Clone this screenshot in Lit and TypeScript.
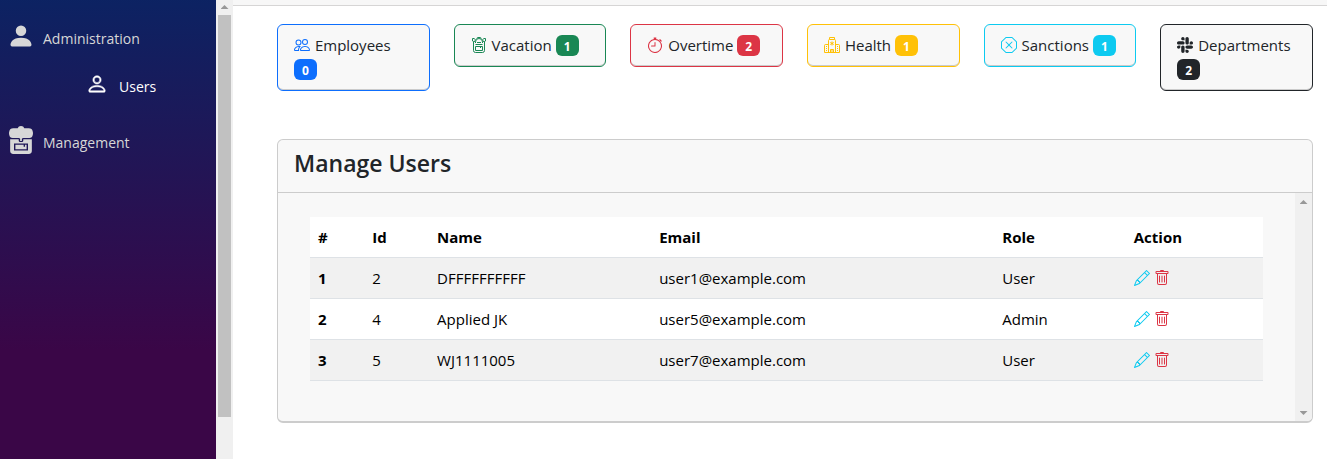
import { LitElement, html, css, svg } from "lit";
import { customElement } from "lit/decorators.js";

const filled = (...paths: string[]) => svg`${paths.map((d) => svg`<path d=${d} fill="currentColor" />`)}`;

const icons = {
  personFill: filled("M3 14s-1 0-1-1 1-4 6-4 6 3 6 4-1 1-1 1H3Zm5-6a3 3 0 1 0 0-6 3 3 0 0 0 0 6Z"),
  person: filled("M8 8a3 3 0 1 0 0-6 3 3 0 0 0 0 6Zm2-3a2 2 0 1 1-4 0 2 2 0 0 1 4 0Zm4 8c0 1-1 1-1 1H3s-1 0-1-1 1-4 6-4 6 3 6 4Zm-1-.004c-.001-.246-.154-.986-.832-1.664C11.516 10.68 10.289 10 8 10c-2.29 0-3.516.68-4.168 1.332-.678.678-.83 1.418-.832 1.664h10Z"),
  backpackFill: svg`
    <path fill="currentColor" d="M8 0a2 2 0 0 0-1.900 1.300H3.600A2.300 2.300 0 0 0 1.300 3.200Q1 4 1.300 5.200A2 2 0 0 0 3.200 6.900H6.700q.5 0 .8.400V8.500h1V7.300q.3-.4.8-.4h3.500a2 2 0 0 0 1.900-1.700q.3-1.200 0-2A2.300 2.300 0 0 0 12.400 1.300H9.900A2 2 0 0 0 8 0Z"/>
    <path fill="currentColor" fill-rule="evenodd" d="M1.800 7.600H6.700v.8a.8.8 0 0 0 .8.8h1a.8.8 0 0 0 .8-.8v-.8H14.200V14.200A1.800 1.800 0 0 1 12.400 16H3.600a1.800 1.800 0 0 1-1.800-1.800ZM4 10v4h8v-4Zm.8.700h4.700v1.200h.8v-1.200h.9v2.600H4.800Z"/>`,
  people: filled("M15 14s1 0 1-1-1-4-5-4-5 3-5 4 1 1 1 1h8Zm-7.978-1A.261.261 0 0 1 7 12.996c.001-.264.167-1.03.76-1.72C8.312 10.629 9.282 10 11 10c1.717 0 2.687.63 3.24 1.276.593.69.758 1.457.76 1.72l-.008.002a.274.274 0 0 1-.014.002H7.022ZM11 7a2 2 0 1 0 0-4 2 2 0 0 0 0 4Zm3-2a3 3 0 1 1-6 0 3 3 0 0 1 6 0ZM6.936 9.28a5.88 5.88 0 0 0-1.23-.247A7.35 7.35 0 0 0 5 9c-4 0-5 3-5 4 0 .667.333 1 1 1h4.216A2.238 2.238 0 0 1 5 13c0-1.01.377-2.042 1.09-2.904.243-.294.526-.569.846-.816ZM4.92 10A5.493 5.493 0 0 0 4 13H1c0-.26.164-1.03.76-1.724.545-.636 1.492-1.256 3.16-1.275ZM1.5 5.500a3 3 0 1 1 6 0 3 3 0 0 1-6 0Zm3-2a2 2 0 1 0 0 4 2 2 0 0 0 0-4Z"),
  backpack: svg`<g fill="none" stroke="currentColor">
    <path d="M6 2V1.500a1 1 0 0 1 1-1h2a1 1 0 0 1 1 1V2M4.500 6V5a3.500 3.500 0 0 1 7 0v1M2.500 5v8.500a2 2 0 0 0 2 2h7a2 2 0 0 0 2-2V5M4.500 9.500h7v4h-7ZM4.500 7.500h7M9.500 9.500v1.500M3 5 1.500 4V1.500h1.800L4.500 3ZM13 5l1.500-1V1.500h-1.800L11.500 3ZM6 5.500h4"/></g>`,
  stopwatch: filled("M8.5 5.6a.5.5 0 1 0-1 0v2.9h-3a.5.5 0 0 0 0 1H8a.5.5 0 0 0 .5-.5V5.6z", "M6.5 1A.5.5 0 0 1 7 .5h2a.5.5 0 0 1 0 1v.57c1.36.196 2.594.78 3.584 1.64a.715.715 0 0 1 .012-.013l.354-.354-.354-.353a.5.5 0 0 1 .707-.708l1.414 1.415a.5.5 0 1 1-.707.707l-.353-.354-.354.354a.512.512 0 0 1-.013.012A7 7 0 1 1 7 2.071V1.5a.5.5 0 0 1-.5-.5zM8 3a6 6 0 1 0 .001 12A6 6 0 0 0 8 3z"),
  hospital: svg`<g fill="none" stroke="currentColor">
    <path d="M5.500 2.500V.5h5v2M4.500 15.500v-12a1 1 0 0 1 1-1h5a1 1 0 0 1 1 1v12M4.500 7.500h-3a1 1 0 0 0-1 1v7h15v-7a1 1 0 0 0-1-1h-3M6.500 15.500v-3h3v3M8 12.500v3M8 4.500v4M6.300 5.500l3.400 2M9.700 5.500l-3.400 2"/>
    <path d="M2.500 9v1M2.500 11v1M2.500 13v1M13.500 9v1M13.500 11v1M13.500 13v1"/></g>`,
  octagon: filled("M4.54.146A.5.5 0 0 1 4.893 0h6.214a.5.5 0 0 1 .353.146l4.394 4.394a.5.5 0 0 1 .146.353v6.214a.5.5 0 0 1-.146.353l-4.394 4.394a.5.5 0 0 1-.353.146H4.893a.5.5 0 0 1-.353-.146L.146 11.46A.5.5 0 0 1 0 11.107V4.893a.5.5 0 0 1 .146-.353L4.54.146zM5.1 1 1 5.1v5.8L5.1 15h5.8l4.1-4.1V5.1L10.9 1H5.1z", "M4.646 4.646a.5.5 0 0 1 .708 0L8 7.293l2.646-2.647a.5.5 0 0 1 .708.708L8.707 8l2.647 2.646a.5.5 0 0 1-.708.708L8 8.707l-2.646 2.647a.5.5 0 0 1-.708-.708L7.293 8 4.646 5.354a.5.5 0 0 1 0-.708z"),
  slack: filled("M3.362 10.11c0 .926-.756 1.681-1.681 1.681S0 11.036 0 10.111C0 9.186.756 8.43 1.68 8.43h1.682v1.68zm.846 0c0-.924.756-1.68 1.681-1.68s1.681.756 1.681 1.68v4.21c0 .924-.756 1.68-1.68 1.68a1.685 1.685 0 0 1-1.682-1.68v-4.21zM5.89 3.362c-.926 0-1.682-.756-1.682-1.681S4.964 0 5.89 0s1.68.756 1.68 1.68v1.682H5.89zm0 .846c.924 0 1.68.756 1.68 1.681S6.814 7.57 5.89 7.57H1.68C.757 7.57 0 6.814 0 5.89c0-.926.756-1.682 1.68-1.682h4.21zm6.749 1.682c0-.926.755-1.682 1.68-1.682.925 0 1.681.756 1.681 1.681s-.756 1.681-1.68 1.681h-1.681V5.89zm-.848 0c0 .924-.755 1.68-1.68 1.68A1.685 1.685 0 0 1 8.43 5.89V1.68C8.43.757 9.186 0 10.11 0c.926 0 1.681.756 1.681 1.68v4.21zm-1.681 6.748c.926 0 1.682.756 1.682 1.681S11.036 16 10.11 16s-1.681-.756-1.681-1.68v-1.682h1.68zm0-.847c-.924 0-1.68-.755-1.68-1.68 0-.925.756-1.681 1.68-1.681h4.21c.924 0 1.68.756 1.68 1.68 0 .926-.756 1.681-1.68 1.681h-4.21z"),
  pencil: filled("M12.146.146a.5.5 0 0 1 .708 0l3 3a.5.5 0 0 1 0 .708l-10 10a.5.5 0 0 1-.168.11l-5 2a.5.5 0 0 1-.65-.65l2-5a.5.5 0 0 1 .11-.168l10-10zM11.207 2.5 13.5 4.793 14.793 3.5 12.5 1.207 11.207 2.5zm1.586 3L10.5 3.207 4 9.707V10h.5a.5.5 0 0 1 .5.5v.5h.5a.5.5 0 0 1 .5.5v.5h.293l6.5-6.5zm-9.761 5.175-.106.106-1.528 3.821 3.821-1.528.106-.106A.5.5 0 0 1 5 12.5V12h-.5a.5.5 0 0 1-.5-.5V11h-.5a.5.5 0 0 1-.468-.325z"),
  trash: filled("M5.5 5.5A.5.5 0 0 1 6 6v6a.5.5 0 0 1-1 0V6a.5.5 0 0 1 .5-.5Zm2.5 0a.5.5 0 0 1 .5.5v6a.5.5 0 0 1-1 0V6a.5.5 0 0 1 .5-.5Zm3 .5a.5.5 0 0 0-1 0v6a.5.5 0 0 0 1 0V6Z", "M14.5 3a1 1 0 0 1-1 1H13v9a2 2 0 0 1-2 2H5a2 2 0 0 1-2-2V4h-.5a1 1 0 0 1-1-1V2a1 1 0 0 1 1-1H6a1 1 0 0 1 1-1h2a1 1 0 0 1 1 1h3.5a1 1 0 0 1 1 1v1ZM4.118 4 4 4.059V13a1 1 0 0 0 1 1h6a1 1 0 0 0 1-1V4.059L11.882 4H4.118ZM2.5 3h11V2h-11v1Z"),
};

type IconName = keyof typeof icons;

const icon = (name: IconName) =>
  html`<svg class="icon" viewBox="0 0 16 16" aria-hidden="true">${icons[name]}</svg>`;

const stats: { label: string; count: number; tone: string; icon: IconName }[] = [
  { label: "Employees", count: 0, tone: "primary", icon: "people" },
  { label: "Vacation", count: 1, tone: "success", icon: "backpack" },
  { label: "Overtime", count: 2, tone: "danger", icon: "stopwatch" },
  { label: "Health", count: 1, tone: "warning", icon: "hospital" },
  { label: "Sanctions", count: 1, tone: "info", icon: "octagon" },
  { label: "Departments", count: 2, tone: "dark", icon: "slack" },
];

const users = [
  { id: 2, name: "DFFFFFFFFFF", email: "user1@example.com", role: "User" },
  { id: 4, name: "Applied JK", email: "user5@example.com", role: "Admin" },
  { id: 5, name: "WJ1111005", email: "user7@example.com", role: "User" },
];

@customElement("app-root")
export class AppRoot extends LitElement {
  static styles = css`
    :host {
      display: flex;
      height: 100vh;
      overflow: hidden;
      background: #fff;
      color: #212529;
      font: 15px/24px "Open Sans", "Noto Sans", sans-serif;
    }
    * { box-sizing: border-box; }
    .icon { width: 16px; height: 16px; flex: none; }

    .sidebar {
      flex: 0 0 216px;
      padding: 21px 7px;
      background: linear-gradient(180deg, #052767 -56px, #3a0647 350px);
      font-size: 14px;
    }
    .nav {
      display: flex;
      align-items: center;
      gap: 8px;
      height: 36px;
      color: #d7d7d7;
      text-decoration: none;
    }
    .nav .icon { width: 28px; height: 28px; margin-bottom: 6px; }
    .nav.child {
      gap: 11px;
      margin: 12px 0 20px;
      padding-left: 79px;
      color: #fff;
    }
    .nav.child .icon {
      width: 22px;
      height: 22px;
      stroke: currentColor;
      stroke-width: 0.4px;
    }

    .scroll {
      display: flex;
      flex-direction: column;
      flex: 0 0 17px;
      background: #f0f0f0;
    }
    .arrow {
      flex: none;
      width: 8px;
      height: 4px;
      margin: 5px auto 6px;
      background: #989898;
      clip-path: polygon(50% 0, 100% 100%, 0 100%);
    }
    .arrow.down {
      margin-top: auto;
      clip-path: polygon(0 0, 100% 0, 50% 100%);
    }
    .body .arrow { margin-top: 7px; }
    .body .arrow.down { margin-top: auto; }
    .thumb {
      height: 87.5%;
      margin: 0 2px;
      background: #c1c1c1;
    }

    .main { flex: 1; min-width: 0; }
    .topbar {
      height: 6px;
      background: #f7f7f7;
      border-bottom: 1px solid #d6d5d5;
    }
    .content { padding: 18px 14px 0 44px; }
    .stats {
      display: grid;
      grid-template-columns: repeat(6, 1fr);
      align-items: start;
      gap: 24px;
      margin-bottom: 48px;
    }
    .stat {
      padding: 8px 16px 9px;
      border: 1px solid var(--tone);
      border-radius: 6px;
      background: #f8f8f8;
      box-shadow: inset 0 -1px 0 rgba(0, 0, 0, 0.18);
    }
    .stat .icon { margin-right: 1px; color: var(--tone); vertical-align: -2px; }
    .badge {
      display: inline-block;
      padding: 6px 8px 3px;
      border-radius: 6px;
      background: var(--tone);
      color: #fff;
      font-size: 12px;
      font-weight: 700;
      line-height: 12px;
    }
    .primary { --tone: #0d6efd; }
    .success { --tone: #198754; }
    .danger { --tone: #dc3545; }
    .warning { --tone: #ffc107; }
    .info { --tone: #0dcaf0; }
    .dark { --tone: #212529; }

    .panel {
      border: 1px solid #ccc;
      border-bottom-width: 2px;
      border-radius: 6px;
      background: #f8f8f8;
      overflow: hidden;
    }
    .title {
      margin: 0;
      padding: 8px 16px 14px;
      border-bottom: 1px solid #ccc;
      font-size: 23px;
      font-weight: 600;
      line-height: 30px;
    }
    .body { display: flex; }
    .table-area { flex: 1; padding: 24px 32px 40px; }
    .users {
      width: 100%;
      border-collapse: separate;
      border-spacing: 0;
      table-layout: fixed;
      color: #000;
    }
    .users th, .users td {
      height: 41px;
      padding: 8px;
      border-bottom: 1px solid #dee2e6;
      text-align: left;
      line-height: 24px;
    }
    .users tr { background: #fff; }
    .users tbody tr:nth-child(odd) { background: #f1f1f1; }
    .c-num { width: 5.7%; }
    .c-id { width: 6.8%; }
    .c-name { width: 23.3%; }
    .c-email { width: 36%; }
    .c-role { width: 13.8%; }
    .actions { display: flex; gap: 4px; }
    .action {
      display: flex;
      padding: 0;
      border: 0;
      background: none;
      color: var(--tone);
      cursor: pointer;
    }
  `;

  render() {
    return html`
      <nav class="sidebar">
        <a class="nav" href="#administration">${icon("personFill")}<span>Administration</span></a>
        <a class="nav child" href="#users">${icon("person")}<span>Users</span></a>
        <a class="nav" href="#management">${icon("backpackFill")}<span>Management</span></a>
      </nav>
      <div class="scroll" aria-hidden="true">
        <div class="arrow"></div>
        <div class="thumb"></div>
      </div>
      <main class="main">
        <div class="topbar"></div>
        <div class="content">
          <section class="stats">
            ${stats.map(
              (s) => html`<div class="stat ${s.tone}">
                ${icon(s.icon)} ${s.label} <span class="badge">${s.count}</span>
              </div>`
            )}
          </section>
          <section class="panel">
            <h2 class="title">Manage Users</h2>
            <div class="body">
              <div class="table-area">
                <table class="users">
                  <thead>
                    <tr>
                      <th class="c-num">#</th>
                      <th class="c-id">Id</th>
                      <th class="c-name">Name</th>
                      <th class="c-email">Email</th>
                      <th class="c-role">Role</th>
                      <th>Action</th>
                    </tr>
                  </thead>
                  <tbody>
                    ${users.map(
                      (u, i) => html`<tr>
                        <th scope="row">${i + 1}</th>
                        <td>${u.id}</td>
                        <td>${u.name}</td>
                        <td>${u.email}</td>
                        <td>${u.role}</td>
                        <td>
                          <div class="actions">
                            <button class="action info" aria-label="Edit">${icon("pencil")}</button>
                            <button class="action danger" aria-label="Delete">${icon("trash")}</button>
                          </div>
                        </td>
                      </tr>`
                    )}
                  </tbody>
                </table>
              </div>
              <div class="scroll" aria-hidden="true">
                <div class="arrow"></div>
                <div class="arrow down"></div>
              </div>
            </div>
          </section>
        </div>
      </main>
    `;
  }
}
